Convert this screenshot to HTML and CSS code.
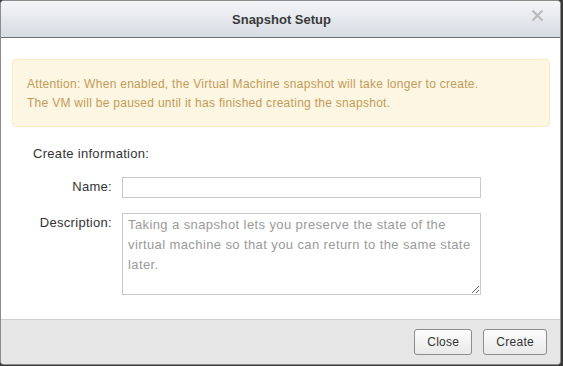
FILE: index.html
```html
<!DOCTYPE html>
<html lang="en">
<head>
    <meta charset="UTF-8">
    <title>Snapshot Setup</title>
    <link rel="stylesheet" href="styles.css">
</head>
<body>
    <div class="dialog">
        <div class="dialog-header">
            <span class="dialog-title">Snapshot Setup</span>
            <span class="close-x">
                <svg width="13" height="13" viewBox="0 0 13 13">
                    <path d="M1.5 1.5 L11.5 11.5 M11.5 1.5 L1.5 11.5" stroke="#b9b9b9" stroke-width="2" fill="none"/>
                </svg>
            </span>
        </div>

        <div class="dialog-body">
            <div class="alert">
                Attention: When enabled, the Virtual Machine snapshot will take longer to create.<br>
                The VM will be paused until it has finished creating the snapshot.
            </div>

            <div class="section-title">Create information:</div>

            <div class="form-row">
                <label class="form-label">Name:</label>
                <input type="text" class="form-input">
            </div>
            <div class="form-row">
                <label class="form-label">Description:</label>
                <textarea class="form-textarea" placeholder="Taking a snapshot lets you preserve the state of the virtual machine so that you can return to the same state later."></textarea>
            </div>
        </div>

        <div class="dialog-footer">
            <button class="btn">Close</button>
            <button class="btn">Create</button>
        </div>
    </div>
</body>
</html>
```

FILE: styles.css
```css
html, body {
    margin: 0;
    padding: 0;
}
body {
    background-color: #3a3a3a;
    font-family: "Liberation Sans", Arial, sans-serif;
    font-size: 12px;
    letter-spacing: 0.28px;
    color: #333;
    width: 563px;
    height: 366px;
    overflow: hidden;
}
.dialog {
    box-sizing: border-box;
    width: 561px;
    height: 365px;
    background-color: #fff;
    border: 1px solid #8a8a8a;
    border-radius: 4px;
    display: flex;
    flex-direction: column;
    overflow: hidden;
}
.dialog-header {
    position: relative;
    height: 36px;
    flex-shrink: 0;
    border-bottom: 1px solid #6e6e6e;
    background: linear-gradient(#f4f5f7, #d6dce3);
    display: flex;
    align-items: center;
    justify-content: center;
}
.dialog-title {
    font-size: 13px;
    font-weight: bold;
    letter-spacing: 0;
    color: #3a3a3a;
    margin-left: 2px;
}
.close-x {
    position: absolute;
    top: 8px;
    right: 16px;
    line-height: 0;
}
.dialog-body {
    flex: 1;
    padding: 21px 10px 0 11px;
}
.alert {
    background-color: #fcf6e3;
    border: 1px solid #f7ecca;
    border-radius: 3px;
    color: #c49a56;
    line-height: 19px;
    padding: 15px 14px 13px 14px;
}
.section-title {
    margin: 19px 0 0 21px;
    font-size: 13px;
    letter-spacing: 0.3px;
    line-height: 16px;
}
.form-row {
    display: flex;
    align-items: flex-start;
    margin-top: 15px;
}
.form-label {
    width: 100px;
    text-align: right;
    padding-right: 10px;
    font-size: 13px;
    letter-spacing: 0.3px;
    line-height: 20px;
}
.form-input {
    box-sizing: border-box;
    width: 359px;
    height: 21px;
    border: 1px solid #c9c9c9;
    padding: 0 5px;
    font-family: inherit;
    font-size: 13px;
    letter-spacing: 0.35px;
    margin: 0;
}
.form-textarea {
    box-sizing: border-box;
    width: 359px;
    height: 82px;
    border: 1px solid #c9c9c9;
    padding: 1px 5px;
    font-family: inherit;
    font-size: 13px;
    letter-spacing: 0.4px;
    line-height: 20px;
    color: #333;
    margin: 0;
    resize: both;
}
.form-textarea::placeholder {
    color: #9a9a9a;
}
.dialog-footer {
    box-sizing: border-box;
    height: 45px;
    flex-shrink: 0;
    border-top: 1px solid #cfcfcf;
    background-color: #e6e6e6;
    display: flex;
    justify-content: flex-end;
    align-items: flex-start;
    gap: 11px;
    padding: 9px 13px 0 0;
}
.btn {
    height: 26px;
    padding: 0 12px;
    font-family: inherit;
    font-size: 12px;
    letter-spacing: inherit;
    color: #333;
    background: linear-gradient(#fcfcfc, #e9e9e9);
    border: 1px solid #8d8d8d;
    border-radius: 3px;
    cursor: pointer;
}
```
